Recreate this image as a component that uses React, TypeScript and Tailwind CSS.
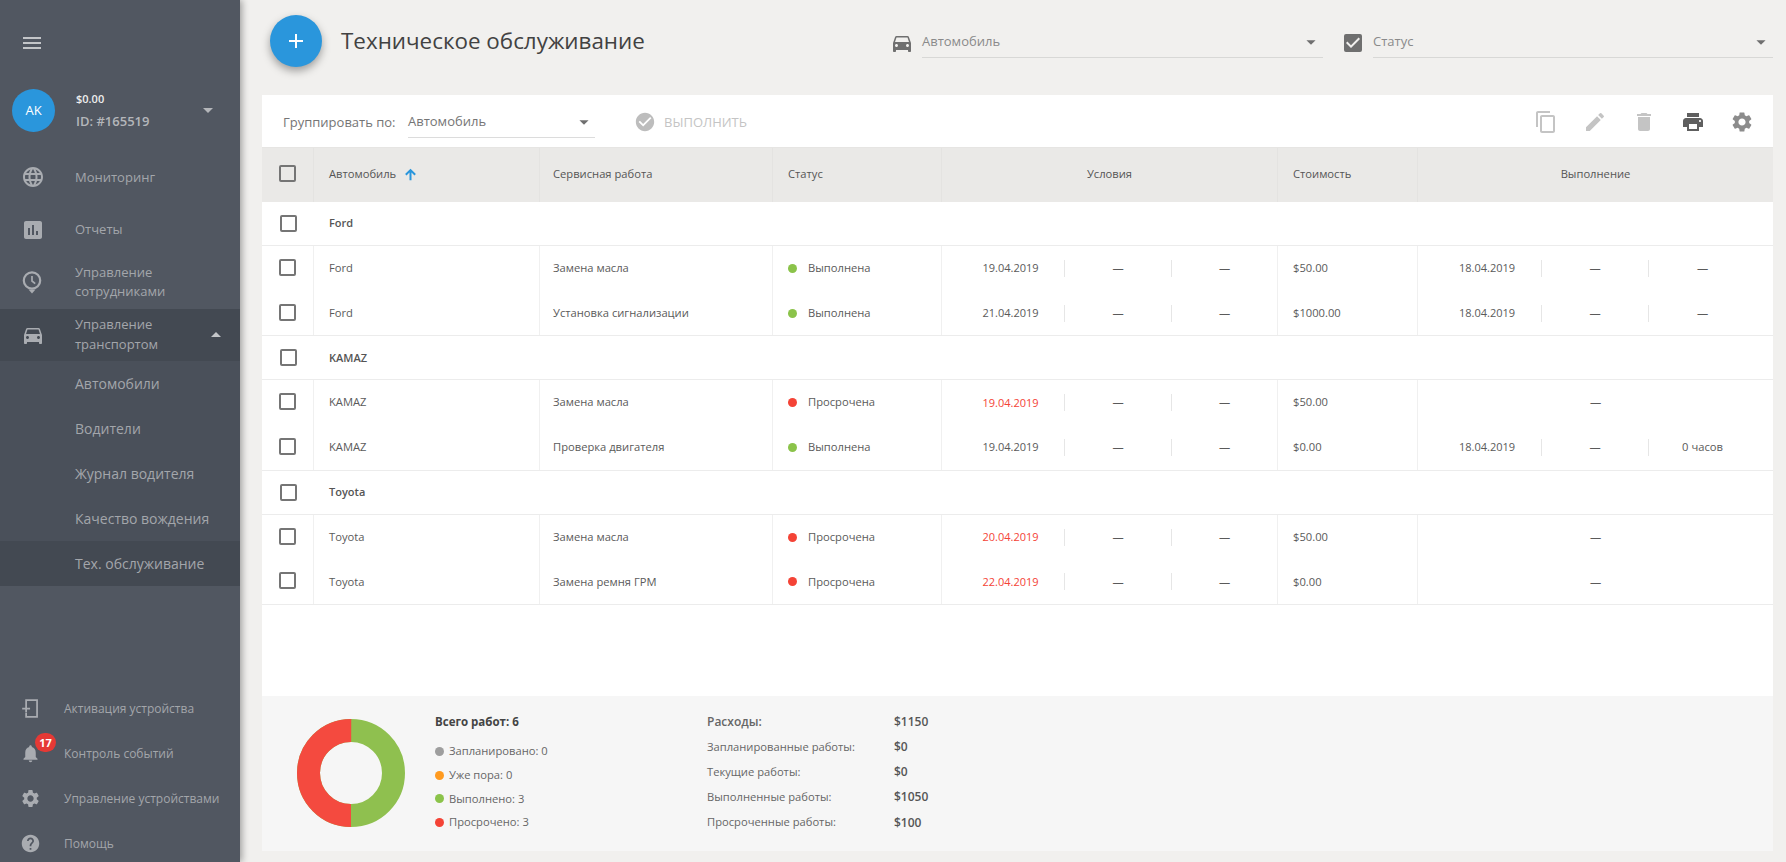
import {
  MdAdd,
  MdArrowDropDown,
  MdArrowDropUp,
  MdAssessment,
  MdCheckBox,
  MdCheckCircle,
  MdContentCopy,
  MdDelete,
  MdDirectionsCar,
  MdEdit,
  MdHelp,
  MdLanguage,
  MdMenu,
  MdNotifications,
  MdPrint,
  MdSettings,
} from "react-icons/md";

const rowGrid =
  "grid grid-cols-[52px_226px_233px_169px_123px_107px_106px_140px_124px_107px_124px]";

const GREEN = "#8bc34a";
const RED = "#f44336";

type Row = {
  car: string;
  job: string;
  late: boolean;
  date: string;
  cost: string;
  done?: string;
  hours?: string;
};

const groups: { name: string; rows: Row[] }[] = [
  {
    name: "Ford",
    rows: [
      { car: "Ford", job: "Замена масла", late: false, date: "19.04.2019", cost: "$50.00", done: "18.04.2019" },
      { car: "Ford", job: "Установка сигнализации", late: false, date: "21.04.2019", cost: "$1000.00", done: "18.04.2019" },
    ],
  },
  {
    name: "KAMAZ",
    rows: [
      { car: "KAMAZ", job: "Замена масла", late: true, date: "19.04.2019", cost: "$50.00" },
      { car: "KAMAZ", job: "Проверка двигателя", late: false, date: "19.04.2019", cost: "$0.00", done: "18.04.2019", hours: "0 часов" },
    ],
  },
  {
    name: "Toyota",
    rows: [
      { car: "Toyota", job: "Замена масла", late: true, date: "20.04.2019", cost: "$50.00" },
      { car: "Toyota", job: "Замена ремня ГРМ", late: true, date: "22.04.2019", cost: "$0.00" },
    ],
  },
];

function PinClock({ className }: { className?: string }) {
  return (
    <svg viewBox="0 0 24 24" className={className} fill="none" stroke="currentColor" strokeWidth={2.2}>
      <circle cx="11" cy="10.500" r="8.200" />
      <path d="M11 6v5l3.200 2.600" strokeWidth={1.7} />
      <path d="M7.500 19.500h7L11 23.500z" fill="currentColor" stroke="none" />
    </svg>
  );
}

function PhoneIn({ className }: { className?: string }) {
  return (
    <svg viewBox="0 0 24 24" className={className} fill="none" stroke="currentColor" strokeWidth={2}>
      <path d="M7 8V2.500h12.500v19H7v-5" />
      <path d="M2.500 12H11.500M7 8v8" />
    </svg>
  );
}

function SortArrow() {
  return (
    <svg viewBox="0 0 24 24" className="ml-[7px] h-[15px] w-[15px] text-[#2a96dc]" fill="none" stroke="currentColor" strokeWidth={3.2}>
      <path d="M12 21V5M4.500 12.500 12 5l7.500 7.500" />
    </svg>
  );
}

function Checkbox() {
  return <div className="h-[17px] w-[17px] rounded-[2px] border-2 border-[#757575]" />;
}

function NavItem({ icon, lines, active, caret }: { icon: React.ReactNode; lines: string[]; active?: boolean; caret?: boolean }) {
  return (
    <div className={`flex h-[52.5px] items-center pl-[21px] pr-[12px] ${active ? "bg-[#434952]" : ""}`}>
      <div className="flex w-[54px] shrink-0 text-[#a9acb1]">{icon}</div>
      <div className="flex-1 text-[13px] leading-[19.5px] text-[#a3a6ab]">
        {lines.map((l) => (
          <div key={l}>{l}</div>
        ))}
      </div>
      {caret && <MdArrowDropUp className="h-[24px] w-[24px] text-[#c4c6c9]" />}
    </div>
  );
}

function SubItem({ label, active }: { label: string; active?: boolean }) {
  return (
    <div className={`flex h-[45px] items-center pl-[75px] text-[14px] text-[#a3a6ab] ${active ? "bg-[#434952]" : ""}`}>
      {label}
    </div>
  );
}

function BottomItem({ icon, label, badge }: { icon: React.ReactNode; label: string; badge?: string }) {
  return (
    <div className="relative flex h-[45px] shrink-0 items-center pl-[20px]">
      <div className="flex w-[44px] shrink-0 text-[#a9acb1]">{icon}</div>
      <span className="text-[12px] text-[#a3a6ab]">{label}</span>
      {badge && (
        <span className="absolute left-[35px] top-[2px] flex h-[19px] w-[21px] items-center justify-center rounded-full bg-[#e53935] text-[11px] font-bold leading-none text-white">
          {badge}
        </span>
      )}
    </div>
  );
}

function Sidebar() {
  return (
    <aside className="z-10 flex h-full w-[240px] shrink-0 flex-col bg-[#515761] shadow-[2px_0_7px_rgba(0,0,0,0.35)]">
      <div className="flex h-[86px] shrink-0 items-center pl-[20px]">
        <MdMenu className="h-[24px] w-[24px] text-[#c3c5c8]" />
      </div>
      <div className="flex h-[65px] shrink-0 items-start pl-[12px] pr-[20px]">
        <div className="mt-[3px] flex h-[43px] w-[43px] items-center justify-center rounded-full bg-[#2a96dc] text-[13px] text-white">
          AK
        </div>
        <div className="ml-[21px] pt-[1px]">
          <div className="text-[11px] font-semibold leading-[23px] text-[#eeeeee]">$0.00</div>
          <div className="text-[13px] font-semibold leading-[23px] text-[#b4b6ba]">ID: #165519</div>
        </div>
        <MdArrowDropDown className="ml-auto mt-[12px] h-[24px] w-[24px] text-[#b4b6ba]" />
      </div>
      <NavItem icon={<MdLanguage className="h-[24px] w-[24px]" />} lines={["Мониторинг"]} />
      <NavItem icon={<MdAssessment className="h-[24px] w-[24px]" />} lines={["Отчеты"]} />
      <NavItem icon={<PinClock className="h-[24px] w-[24px]" />} lines={["Управление", "сотрудниками"]} />
      <NavItem icon={<MdDirectionsCar className="h-[24px] w-[24px]" />} lines={["Управление", "транспортом"]} active caret />
      <div className="shrink-0 bg-[#4a505a]">
        <SubItem label="Автомобили" />
        <SubItem label="Водители" />
        <SubItem label="Журнал водителя" />
        <SubItem label="Качество вождения" />
        <SubItem label="Тех. обслуживание" active />
      </div>
      <div className="flex-1" />
      <div className="flex h-[176px] shrink-0 flex-col overflow-hidden">
        <BottomItem icon={<PhoneIn className="h-[21px] w-[21px]" />} label="Активация устройства" />
        <BottomItem icon={<MdNotifications className="h-[21px] w-[21px]" />} label="Контроль событий" badge="17" />
        <BottomItem icon={<MdSettings className="h-[21px] w-[21px]" />} label="Управление устройствами" />
        <BottomItem icon={<MdHelp className="h-[21px] w-[21px]" />} label="Помощь" />
      </div>
    </aside>
  );
}

function FilterSelect({ icon, label, className }: { icon: React.ReactNode; label: string; className: string }) {
  return (
    <div className={`flex items-center ${className}`}>
      <div className="flex w-[32px] shrink-0 justify-start text-[#6f6f6f]">{icon}</div>
      <div className="flex h-[31px] flex-1 items-center justify-between border-b border-[#d8d8d6] pb-[1px] pr-[1px]">
        <span className="text-[13px] text-[#8a8a8a]">{label}</span>
        <MdArrowDropDown className="h-[22px] w-[22px] text-[#6f6f6f]" />
      </div>
    </div>
  );
}

function Header() {
  return (
    <div className="flex h-[95px] shrink-0 items-start">
      <div className="ml-[8px] mt-[15px] flex h-[52px] w-[52px] items-center justify-center rounded-full bg-[#2a96dc] shadow-[0_4px_9px_rgba(0,0,0,0.35)]">
        <MdAdd className="h-[24px] w-[24px] text-white" />
      </div>
      <h1 className="ml-[19px] mt-[23px] w-[549px] text-[22.400px] font-normal leading-[36px] text-[#424242]">Техническое обслуживание</h1>
      <FilterSelect
        icon={<MdDirectionsCar className="h-[24px] w-[24px]" />}
        label="Автомобиль"
        className="mt-[27px] w-[433px]"
      />
      <div className="w-[18px]" />
      <FilterSelect
        icon={<MdCheckBox className="h-[24px] w-[24px]" />}
        label="Статус"
        className="mt-[27px] w-[432px]"
      />
    </div>
  );
}

function Toolbar() {
  return (
    <div className="flex h-[53px] shrink-0 items-center border-b border-[#e6e5e3] pl-[21px] pr-[19px]">
      <span className="w-[125px] pt-[4px] text-[13px] text-[#757575]">Группировать по:</span>
      <div className="flex h-[33px] w-[187px] items-center justify-between border-b border-[#dcdcdc] pt-[3px]">
        <span className="text-[13px] text-[#757575]">Автомобиль</span>
        <MdArrowDropDown className="h-[22px] w-[22px] text-[#6f6f6f]" />
      </div>
      <MdCheckCircle className="ml-[39px] mt-[2px] h-[22px] w-[22px] text-[#bdbdbd]" />
      <span className="ml-[8px] pt-[4px] text-[13px] text-[#c4c4c4]">ВЫПОЛНИТЬ</span>
      <div className="ml-auto flex items-center gap-[25px] pt-[2px]">
        <MdContentCopy className="h-[24px] w-[24px] text-[#c4c4c4]" />
        <MdEdit className="h-[24px] w-[24px] text-[#c4c4c4]" />
        <MdDelete className="h-[24px] w-[24px] text-[#c4c4c4]" />
        <MdPrint className="h-[24px] w-[24px] text-[#5f5f5f]" />
        <MdSettings className="h-[24px] w-[24px] text-[#8c8c8c]" />
      </div>
    </div>
  );
}

function TableHead() {
  const cell = "flex items-center border-r border-[#e4e3e1] pb-[2px] text-[11.200px] text-[#555555]";
  return (
    <div className={`${rowGrid} h-[54px] shrink-0 bg-[#eae9e7]`}>
      <div className={`${cell} justify-center`}>
        <div className="mb-[2px]">
          <Checkbox />
        </div>
      </div>
      <div className={`${cell} pl-[15px]`}>
        Автомобиль
        <SortArrow />
      </div>
      <div className={`${cell} pl-[13px]`}>Сервисная работа</div>
      <div className={`${cell} pl-[15px]`}>Статус</div>
      <div className={`${cell} col-span-3 justify-center`}>Условия</div>
      <div className={`${cell} pl-[15px]`}>Стоимость</div>
      <div className="col-span-3 flex items-center justify-center pb-[2px] text-[11.200px] text-[#555555]">Выполнение</div>
    </div>
  );
}

function Dash({ divider }: { divider?: boolean }) {
  return (
    <div className={`flex h-[17px] items-center justify-center ${divider ? "border-r border-[#e6e6e6]" : ""}`}>—</div>
  );
}

function DataRow({ row, last }: { row: Row; last: boolean }) {
  const cell = "flex items-center border-r border-[#f0f0f0]";
  return (
    <div className={`${rowGrid} text-[11.200px] text-[#5a5a5a] ${last ? "h-[45.400px] border-b border-[#ececec]" : "h-[45px]"}`}>
      <div className={`${cell} justify-center`}>
        <div className="mb-[2px]">
          <Checkbox />
        </div>
      </div>
      <div className={`${cell} pl-[15px]`}>{row.car}</div>
      <div className={`${cell} pl-[13px]`}>{row.job}</div>
      <div className={`${cell} pl-[15px]`}>
        <span className="h-[9px] w-[9px] rounded-full" style={{ backgroundColor: row.late ? RED : GREEN }} />
        <span className="ml-[11px]">{row.late ? "Просрочена" : "Выполнена"}</span>
      </div>
      <div className="flex items-center">
        <div className={`flex h-[17px] w-full items-center justify-center border-r border-[#e6e6e6] pl-[15px] text-[11px] ${row.late ? "text-[#f44336]" : ""}`}>
          {row.date}
        </div>
      </div>
      <div className="flex items-center justify-center">
        <div className="w-full"><Dash divider /></div>
      </div>
      <div className={`${cell} justify-center`}>—</div>
      <div className={`${cell} pl-[15px]`}>{row.cost}</div>
      {row.done ? (
        <>
          <div className="flex items-center">
            <div className="flex h-[17px] w-full items-center justify-center border-r border-[#e6e6e6] pl-[15px] text-[11px]">{row.done}</div>
          </div>
          <div className="flex items-center">
            <div className="w-full"><Dash divider /></div>
          </div>
          <div className="flex items-center justify-center pr-[17px]">{row.hours ?? "—"}</div>
        </>
      ) : (
        <div className="col-span-3 flex items-center justify-center">—</div>
      )}
    </div>
  );
}

function Donut() {
  const c = 2 * Math.PI * 42.5;
  return (
    <svg viewBox="0 0 108 108" className="h-[108px] w-[108px]">
      <circle cx="54" cy="54" r="42.5" fill="none" stroke="#8fc04f" strokeWidth="23" />
      <circle
        cx="54"
        cy="54"
        r="42.5"
        fill="none"
        stroke="#f44a3f"
        strokeWidth="23"
        strokeDasharray={`${c / 2} ${c / 2}`}
        transform="rotate(90 54 54)"
      />
    </svg>
  );
}

function Summary() {
  const legend = [
    { label: "Запланировано: 0", color: "#9e9e9e" },
    { label: "Уже пора: 0", color: "#ff9a1f" },
    { label: "Выполнено: 3", color: "#8bc34a" },
    { label: "Просрочено: 3", color: "#f44336" },
  ];
  const costs = [
    ["Запланированные работы:", "$0"],
    ["Текущие работы:", "$0"],
    ["Выполненные работы:", "$1050"],
    ["Просроченные работы:", "$100"],
  ];
  return (
    <div className="mt-auto flex h-[155px] shrink-0 bg-[#f6f6f6]">
      <div className="ml-[35px] mt-[23px]">
        <Donut />
      </div>
      <div className="ml-[30px] w-[272px] pt-[17px]">
        <div className="text-[11.500px] font-bold leading-[18px] text-[#444444]">Всего работ: 6</div>
        <div className="mt-[9px] flex flex-col">
          {legend.map((l) => (
            <div key={l.label} className="flex h-[23.600px] items-center text-[11.200px] text-[#666666]">
              <span className="h-[9px] w-[9px] rounded-full" style={{ backgroundColor: l.color }} />
              <span className="ml-[5px]">{l.label}</span>
            </div>
          ))}
        </div>
      </div>
      <div className="pt-[13.500px]">
        <div className="flex h-[25px] items-center text-[12px] font-semibold text-[#666666]">
          <span className="w-[187px]">Расходы:</span>
          <span className="text-[#555555]">$1150</span>
        </div>
        {costs.map(([k, v]) => (
          <div key={k} className="flex h-[25.200px] items-center text-[11.200px] text-[#666666]">
            <span className="w-[187px]">{k}</span>
            <span className="text-[12px] font-semibold text-[#555555]">{v}</span>
          </div>
        ))}
      </div>
    </div>
  );
}

export default function App() {
  return (
    <div className="flex h-screen w-full overflow-hidden bg-[#f1f0ee] font-['Open_Sans',sans-serif]">
      <Sidebar />
      <main className="flex min-w-0 flex-1 flex-col pb-[11px] pl-[22px] pr-[13px]">
        <Header />
        <section className="flex min-h-0 flex-1 flex-col bg-white">
          <Toolbar />
          <TableHead />
          {groups.map((g) => (
            <div key={g.name}>
              <div className="flex h-[44px] items-center border-b border-[#ececec]">
                <div className="flex w-[52px] justify-center">
                  <Checkbox />
                </div>
                <span className="pl-[15px] text-[11px] font-semibold text-[#555555]">{g.name}</span>
              </div>
              {g.rows.map((r, i) => (
                <DataRow key={r.job} row={r} last={i === g.rows.length - 1} />
              ))}
            </div>
          ))}
          <Summary />
        </section>
      </main>
    </div>
  );
}
